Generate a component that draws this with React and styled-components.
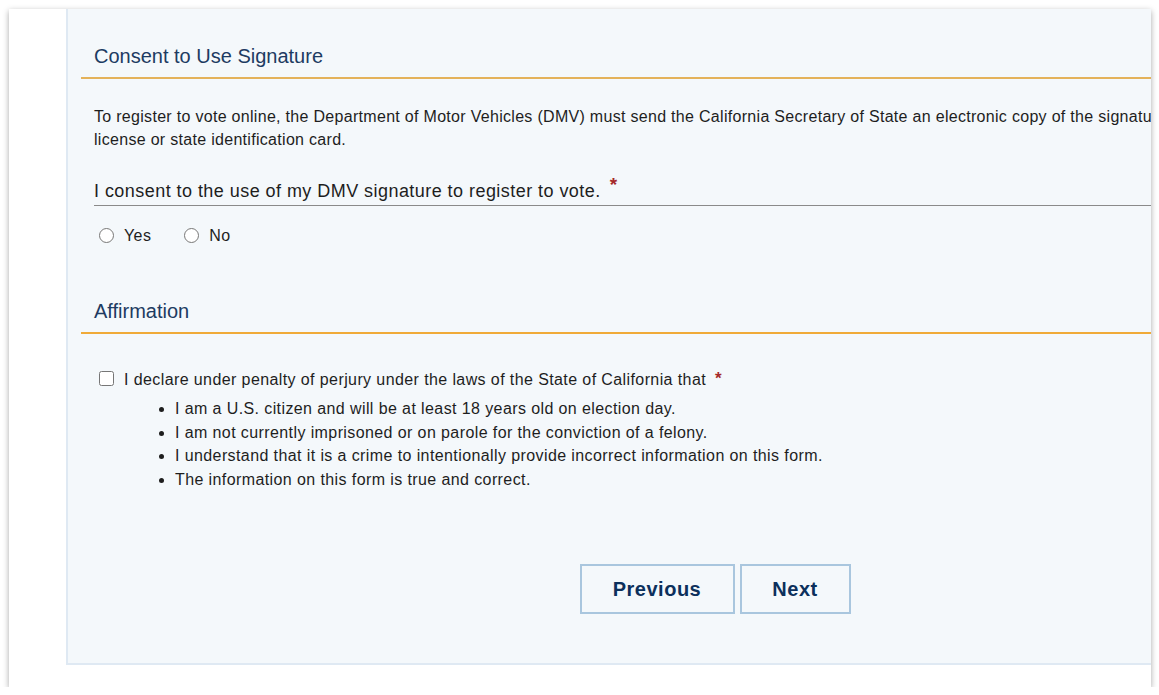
import React, { useState } from 'react';
import styled, { createGlobalStyle } from 'styled-components';

const GlobalStyle = createGlobalStyle`
  html, body {
    margin: 0;
    padding: 0;
    background: #ffffff;
  }
  body {
    font-family: 'Liberation Sans', Arial, sans-serif;
    color: #1e1e1e;
  }
`;

const Card = styled.div`
  margin: 9px 8px 0 9px;
  height: 678px;
  width: 1142px;
  background: #ffffff;
  box-shadow: 0 2px 6px rgba(0, 0, 0, 0.35);
  overflow: hidden;
  display: flex;
  padding-left: 57px;
  box-sizing: border-box;
`;

const Panel = styled.div`
  flex-shrink: 0;
  width: 1296px;
  height: 656px;
  box-sizing: border-box;
  background: #f4f8fb;
  border-left: 2px solid #dfe9f3;
  border-bottom: 2px solid #dfe9f3;
  padding-top: 35px;
  display: flex;
  flex-direction: column;
`;

const Section = styled.div`
  margin-left: 13px;
  margin-top: ${(p) => p.$top || 0}px;
`;

const SectionTitle = styled.h2`
  margin: 0;
  padding: 0 0 9px 13px;
  font-size: 20px;
  line-height: 24px;
  font-weight: normal;
  color: #1d3b62;
  border-bottom: 2px solid ${(p) => p.$line};
`;

const Body = styled.div`
  padding-left: 13px;
`;

const Intro = styled.p`
  margin: 26px 0 0;
  font-size: 16px;
  letter-spacing: 0.3px;
  line-height: 23px;
  white-space: nowrap;
`;

const Question = styled.div`
  margin-top: 29px;
  font-size: 18px;
  letter-spacing: 0.45px;
  line-height: 22px;
  padding-bottom: 3px;
  border-bottom: 1px solid #8a8a8a;
  white-space: nowrap;
`;

const Required = styled.span`
  color: #a52a2a;
  font-weight: bold;
  margin-left: ${(p) => p.$gap}px;
  font-size: ${(p) => p.$size}px;
  position: relative;
  top: ${(p) => p.$raise}px;
`;

const RadioRow = styled.div`
  display: flex;
  align-items: center;
  margin-top: 20px;
  height: 20px;
`;

const ChoiceLabel = styled.label`
  display: flex;
  align-items: center;
  font-size: 16px;
  letter-spacing: 0.4px;
  margin-right: 28px;
  cursor: pointer;
`;

const Radio = styled.input`
  width: 15px;
  height: 15px;
  margin: 0 10px 2px 5px;
`;

const CheckRow = styled.label`
  display: flex;
  align-items: center;
  margin-top: 34px;
  font-size: 16px;
  letter-spacing: 0.4px;
  line-height: 23px;
  white-space: nowrap;
`;

const Check = styled.input`
  width: 15px;
  height: 15px;
  margin: 0 10px 2px 5px;
`;

const Bullets = styled.ul`
  margin: 6px 0 0;
  padding-left: 81px;
  font-size: 16px;
  letter-spacing: 0.4px;
  line-height: 23.7px;
  white-space: nowrap;
`;

const ButtonRow = styled.div`
  display: flex;
  justify-content: center;
  gap: 5px;
  margin-top: auto;
  margin-bottom: 49px;
`;

const NavButton = styled.button`
  width: ${(p) => p.$width}px;
  height: 50px;
  padding: 0;
  background: #f4f8fb;
  border: 2px solid #a9c6de;
  color: #0c305c;
  font-family: 'Liberation Sans', Arial, sans-serif;
  font-size: 20px;
  letter-spacing: 0.5px;
  font-weight: bold;
  cursor: pointer;
`;

export default function App() {
  const [consent, setConsent] = useState('');
  const [agree, setAgree] = useState(false);

  return (
    <>
      <GlobalStyle />
      <Card>
        <Panel>
          <Section>
            <SectionTitle $line="#e4b25a">Consent to Use Signature</SectionTitle>
            <Body>
              <Intro>
                To register to vote online, the Department of Motor Vehicles (DMV) must send the California Secretary of State an electronic copy of the signature from your California driver
                <br />
                license or state identification card.
              </Intro>
              <Question>
                I consent to the use of my DMV signature to register to vote.
                <Required $gap={9} $size={19} $raise={-6}>*</Required>
              </Question>
              <RadioRow>
                <ChoiceLabel>
                  <Radio type="radio" name="consent" checked={consent === 'yes'} onChange={() => setConsent('yes')} />
                  Yes
                </ChoiceLabel>
                <ChoiceLabel>
                  <Radio type="radio" name="consent" checked={consent === 'no'} onChange={() => setConsent('no')} />
                  No
                </ChoiceLabel>
              </RadioRow>
            </Body>
          </Section>

          <Section $top={53}>
            <SectionTitle $line="#f0aa38">Affirmation</SectionTitle>
            <Body>
              <CheckRow>
                <Check type="checkbox" checked={agree} onChange={() => setAgree(!agree)} />
                I declare under penalty of perjury under the laws of the State of California that
                <Required $gap={9} $size={17} $raise={-1}>*</Required>
              </CheckRow>
              <Bullets>
                <li>I am a U.S. citizen and will be at least 18 years old on election day.</li>
                <li>I am not currently imprisoned or on parole for the conviction of a felony.</li>
                <li>I understand that it is a crime to intentionally provide incorrect information on this form.</li>
                <li>The information on this form is true and correct.</li>
              </Bullets>
            </Body>
          </Section>

          <ButtonRow>
            <NavButton $width={155}>Previous</NavButton>
            <NavButton $width={111}>Next</NavButton>
          </ButtonRow>
        </Panel>
      </Card>
    </>
  );
}
